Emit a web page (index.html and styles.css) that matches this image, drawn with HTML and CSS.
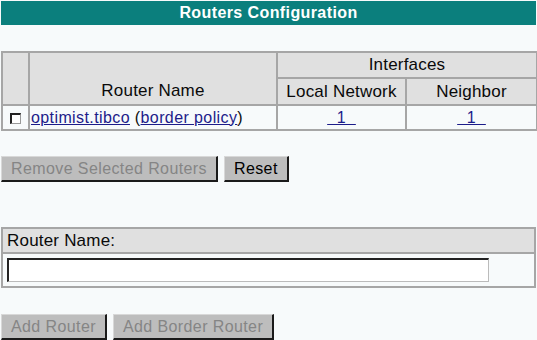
FILE: index.html
```html
<!DOCTYPE html>
<html>
<head>
<meta charset="utf-8">
<link rel="stylesheet" href="styles.css">
</head>
<body>
<div class="title">Routers Configuration</div>

<table class="grid routers">
  <colgroup>
    <col class="c1"><col class="c2"><col class="c3"><col class="c4">
  </colgroup>
  <tr class="h1">
    <th rowspan="2"></th>
    <th rowspan="2" class="bottom">Router Name</th>
    <th colspan="2">Interfaces</th>
  </tr>
  <tr class="h2">
    <th>Local Network</th>
    <th>Neighbor</th>
  </tr>
  <tr class="data">
    <td class="chk"><span class="box"></span></td>
    <td><a href="#">optimist.tibco</a> (<a href="#">border policy</a>)</td>
    <td class="num"><a href="#">&nbsp;&nbsp;1&nbsp;&nbsp;</a></td>
    <td class="num"><a href="#">&nbsp;&nbsp;1&nbsp;&nbsp;</a></td>
  </tr>
</table>

<div class="buttons first">
  <button class="btn disabled">Remove Selected Routers</button>
  <button class="btn">Reset</button>
</div>

<table class="grid form">
  <tr class="fh"><th>Router Name:</th></tr>
  <tr class="fi"><td><span class="input"></span></td></tr>
</table>

<div class="buttons last">
  <button class="btn disabled">Add Router</button>
  <button class="btn disabled">Add Border Router</button>
</div>
</body>
</html>
```
FILE: styles.css
```css
html, body {
  margin: 0;
  padding: 0;
  background: #f7fafb;
  font-family: "Liberation Sans", Arial, sans-serif;
  font-size: 16px;
  letter-spacing: 0.4px;
  color: #0a0a0a;
}
.title {
  margin: 1px 1px 0 1px;
  height: 24px;
  line-height: 24px;
  background: #0b7f7d;
  color: #fff;
  font-weight: bold;
  text-align: center;
  font-size: 16px;
}
.grid {
  border-collapse: collapse;
  margin-left: 1px;
  width: 535px;
}
.grid th, .grid td {
  border: 2px solid #a6a6a6;
  padding: 0;
}
.grid th {
  background: #e0e0e0;
  font-weight: normal;
}
.routers {
  margin-top: 26px;
  table-layout: fixed;
}
.routers th {
  font-size: 17px;
  letter-spacing: 0.2px;
}
.c1 { width: 27px; }
.c2 { width: 248px; }
.c3 { width: 129px; }
.c4 { width: 131px; }
.h1 th { height: 24px; vertical-align: middle; }
.h2 th { height: 25px; }
.routers th.bottom { vertical-align: bottom; padding-bottom: 3px; }
.data td { height: 23px; padding-left: 1px; white-space: nowrap; }
.data td.num { text-align: center; padding-left: 0; }
a { color: #1c1c8a; text-decoration: underline; }
.chk { text-align: center; }
.box {
  display: inline-block;
  width: 8px;
  height: 8px;
  background: #fff;
  border-top: 2px solid #222;
  border-left: 2px solid #222;
  border-right: 1px solid #999;
  border-bottom: 1px solid #999;
  vertical-align: -1px;
  margin-left: -1px;
}
.buttons {
  display: flex;
  gap: 6px;
  margin-left: 1px;
}
.buttons.first { margin-top: 25px; }
.buttons.last { margin-top: 26px; }
.btn {
  font-family: "Liberation Sans", Arial, sans-serif;
  font-size: 16px;
  letter-spacing: 0.4px;
  height: 26px;
  padding: 0 9px;
  background: #bdbdbd;
  color: #000;
  border-top: 1px solid #d8d8d8;
  border-left: 1px solid #d8d8d8;
  border-right: 2px solid #1a1a1a;
  border-bottom: 2px solid #1a1a1a;
  border-radius: 0;
  line-height: 22px;
}
.btn.disabled { color: #858585; }
.form {
  margin-top: 45px;
}
.fh th {
  text-align: left;
  height: 23px;
  padding-left: 4px;
  font-size: 17px;
  letter-spacing: 0.2px;
}
.fi td {
  height: 32px;
  padding-left: 4px;
}
.input {
  display: block;
  width: 479px;
  height: 21px;
  background: #fff;
  border-top: 2px solid #222;
  border-left: 2px solid #222;
  border-right: 1px solid #bbb;
  border-bottom: 1px solid #bbb;
}
```
